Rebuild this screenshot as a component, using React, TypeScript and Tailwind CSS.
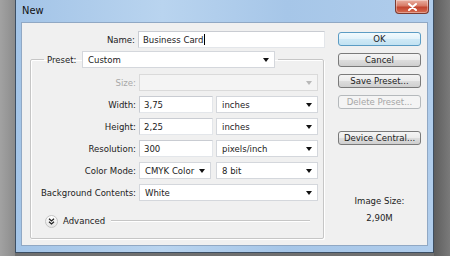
import React from "react";

const Caret = ({ disabled = false }: { disabled?: boolean }) => (
  <svg width="6" height="4" viewBox="0 0 6 4" className="shrink-0">
    <polygon points="0,0 6,0 3,4" fill={disabled ? "#b8b8b8" : "#111"} />
  </svg>
);

const Select = ({
  value,
  w,
  disabled = false,
}: {
  value: string;
  w: string;
  disabled?: boolean;
}) => (
  <div
    className={`${w} h-[17px] flex items-center justify-between pl-[5px] pr-[5px] border ${
      disabled ? "bg-[#f4f4f4] border-[#dadada]" : "bg-white border-[#d4d7dc]"
    }`}
  >
    <span className="leading-none">{value}</span>
    <Caret disabled={disabled} />
  </div>
);

const Input = ({ value, w, cursor = false }: { value: string; w: string; cursor?: boolean }) => (
  <div className={`${w} h-[17px] flex items-center pl-[4px] bg-white border border-[#c9ccd2] border-b-[#e3e6ea] border-r-[#e3e6ea]`}>
    <span className="leading-none">{value}</span>
    {cursor && <span className="w-px h-[11px] bg-black ml-px" />}
  </div>
);

const Label = ({ children, w, disabled = false }: { children: React.ReactNode; w: string; disabled?: boolean }) => (
  <div className={`${w} text-right leading-none ${disabled ? "text-[#a8a8a8]" : "text-[#222]"}`}>{children}</div>
);

const Btn = ({
  children,
  primary = false,
  disabled = false,
  className = "",
}: {
  children: React.ReactNode;
  primary?: boolean;
  disabled?: boolean;
  className?: string;
}) => (
  <div
    className={`w-[83px] h-[14px] flex items-center justify-center rounded-[3px] border leading-none ${
      primary
        ? "border-[#5b9cc4] bg-[linear-gradient(#f2fafd_0%,#e2f2fa_50%,#cfe9f6_51%,#c2e2f2_100%)] text-[#222]"
        : disabled
        ? "border-[#b5b9bc] bg-[#f4f4f4] text-[#a6a6a6]"
        : "border-[#7a7a7a] bg-[linear-gradient(#f4f4f4_0%,#ebebeb_50%,#dddddd_51%,#cfcfcf_100%)] text-[#222]"
    } ${className}`}
  >
    {children}
  </div>
);

export default function App() {
  return (
    <div className="w-[450px] h-[256px] overflow-hidden flex items-start bg-[#6f6f6f] font-['DejaVu_Sans_Condensed','Liberation_Sans',sans-serif] text-[9.5px] text-[#222]">
      <div className="w-[15px] h-full bg-[linear-gradient(to_right,#a2a2a2,#959595_60%,#8a8a8a)]" />
      <div className="w-[419px] h-[253px] flex flex-col border-l border-r border-b border-[#3d4f63] bg-[linear-gradient(to_right,#a3c4e7,#b9d4ef_35%,#a6c6e8_65%,#b0cdec)]">
        {/* title bar */}
        <div className="h-[21px] flex items-start justify-between shrink-0">
          <div className="pl-[6px] pt-[5px] text-[11px] leading-none text-[#111]">New</div>
          <div className="mr-[4px] w-[34px] h-[14px] flex items-center justify-center rounded-b-[4px] border border-t-0 border-[#7b3b31] bg-[linear-gradient(#eab0a2,#d77a66_45%,#c2442f_55%,#d66d52)] shadow-[inset_0_0_0_1px_rgba(255,255,255,0.35)]">
            <svg width="9" height="8" viewBox="0 0 9 8">
              <path d="M1 1 L8 7 M8 1 L1 7" stroke="#fff" strokeWidth="2" strokeLinecap="round" />
            </svg>
          </div>
        </div>
        {/* content */}
        <div className="mx-[5px] h-[224px] mt-px bg-[#f0f0f0] border border-[#90a8c4] flex">
          {/* left */}
          <div className="w-[303px] flex flex-col pt-[8px] shrink-0">
            <div className="flex items-center">
              <Label w="w-[114px]">Name:</Label>
              <div className="ml-[3px]">
                <Input value="Business Card" w="w-[187px]" cursor />
              </div>
            </div>
            <fieldset className="ml-[8px] mt-[3px] w-[294px] border border-[#c6c6c6] rounded-[2px] shadow-[inset_1px_1px_0_#fff,1px_1px_0_#fff] pb-[10px]">
              <legend className="ml-[13px] px-[3px]">
                <div className="flex items-center">
                  <span className="w-[35px] leading-none">Preset:</span>
                  <Select value="Custom" w="w-[193px]" />
                </div>
              </legend>
              <div className="flex flex-col gap-[5px] mt-[6px]">
                <div className="flex items-center">
                  <Label w="w-[105px]" disabled>Size:</Label>
                  <div className="ml-[3px]">
                    <Select value="" w="w-[179px]" disabled />
                  </div>
                </div>
                <div className="flex items-center">
                  <Label w="w-[105px]">Width:</Label>
                  <div className="ml-[3px] flex gap-[3px]">
                    <Input value="3,75" w="w-[74px]" />
                    <Select value="inches" w="w-[102px]" />
                  </div>
                </div>
                <div className="flex items-center">
                  <Label w="w-[105px]">Height:</Label>
                  <div className="ml-[3px] flex gap-[3px]">
                    <Input value="2,25" w="w-[74px]" />
                    <Select value="inches" w="w-[102px]" />
                  </div>
                </div>
                <div className="flex items-center">
                  <Label w="w-[105px]">Resolution:</Label>
                  <div className="ml-[3px] flex gap-[3px]">
                    <Input value="300" w="w-[74px]" />
                    <Select value="pixels/inch" w="w-[102px]" />
                  </div>
                </div>
                <div className="flex items-center">
                  <Label w="w-[105px]">Color Mode:</Label>
                  <div className="ml-[3px] flex gap-[5px]">
                    <Select value="CMYK Color" w="w-[72px]" />
                    <Select value="8 bit" w="w-[102px]" />
                  </div>
                </div>
                <div className="flex items-center">
                  <Label w="w-[105px]">Background Contents:</Label>
                  <div className="ml-[3px]">
                    <Select value="White" w="w-[179px]" />
                  </div>
                </div>
              </div>
              <div className="flex items-center mt-[13px] h-[14px] ml-[14px] mr-[13px]">
                <div className="w-[13px] h-[13px] rounded-full border border-[#c4c4c4] bg-[linear-gradient(#ffffff,#e4e4e4)] flex items-center justify-center">
                  <svg width="7" height="7" viewBox="0 0 7 7">
                    <path d="M1 0.8 L3.5 3 L6 0.8 M1 3.8 L3.5 6 L6 3.8" stroke="#222" strokeWidth="1.2" fill="none" />
                  </svg>
                </div>
                <span className="ml-[5px] leading-none">Advanced</span>
                <div className="flex-1 ml-[6px] h-[2px] border-t border-[#c6c6c6] border-b border-b-white" />
              </div>
            </fieldset>
          </div>
          {/* right */}
          <div className="ml-[13px] pt-[9px] flex flex-col items-center w-[83px]">
            <div className="flex flex-col gap-[7px]">
              <Btn primary>OK</Btn>
              <Btn>Cancel</Btn>
              <Btn>Save Preset...</Btn>
              <Btn disabled>Delete Preset...</Btn>
              <Btn className="mt-[15px]">Device Central...</Btn>
            </div>
            <div className="mt-[51px] leading-none">Image Size:</div>
            <div className="mt-[7px] leading-none">2,90M</div>
          </div>
        </div>
      </div>
      <div className="flex-1 h-full bg-[linear-gradient(to_right,#5e5e5e,#7a7a7a)]" />
    </div>
  );
}
